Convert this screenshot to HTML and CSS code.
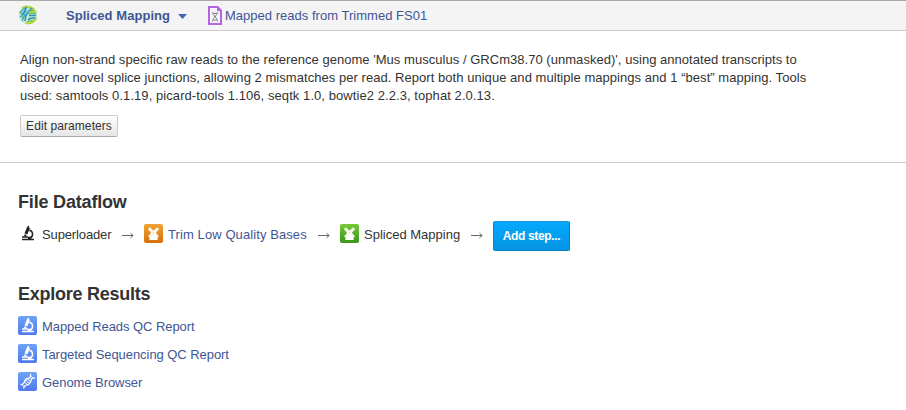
FILE: index.html
```html
<!DOCTYPE html>
<html lang="en">
<head>
<meta charset="utf-8">
<title>Spliced Mapping</title>
<link rel="stylesheet" href="styles.css">
</head>
<body>
<svg class="defs" aria-hidden="true">
  <defs>
    <linearGradient id="orange" x2="0" y2="1"><stop stop-color="#f2a336"/><stop offset="1" stop-color="#d5700b"/></linearGradient>
    <linearGradient id="green" x2="0" y2="1"><stop stop-color="#76c936"/><stop offset="1" stop-color="#38961c"/></linearGradient>
    <linearGradient id="blue" x2="0" y2="1"><stop stop-color="#6ea3f7"/><stop offset="1" stop-color="#5078ed"/></linearGradient>
    <symbol id="scope" viewBox="0 0 19 19">
      <path d="M9.2 2.8 12 4l-2.7 6.4-2.8-1.2z" fill="currentColor"/>
      <path d="M9.7 3.8 10.6 2M6.2 10.9l2.200.9M11.300 6.300c4.100.8 4.500 6.200.4 8M4 13h6M4 15.500h12" fill="none" stroke="currentColor" stroke-width="1.500"/>
      <path d="M10 12.7h2.500V15H10z" fill="currentColor"/>
    </symbol>
    <symbol id="mill" viewBox="0 0 19 19">
      <path d="M7 8C8 6 11 6 12 8l1.800 8H5.200z" fill="#fff"/>
      <path d="m4.900 4.300 9 9M14.100 4.300l-9 9" stroke="#fff" stroke-width="3"/>
      <path d="m5 4.400 8.800 8.800M14 4.400l-8.800 8.800" stroke="#dcc391" stroke-width=".5"/>
    </symbol>
  </defs>
</svg>
<header class="topbar">
  <svg class="globe" viewBox="0 0 20 20">
    <circle cx="10" cy="10" r="9.300" fill="#c5e8ce"/>
    <g fill="none">
      <path d="M4 3.500c3-3 9-2 12 1M8 18c5 1 8-1 10-5M12 7c2 0 4-3 6 0" stroke="#b5d832" stroke-width="2.200"/>
      <path d="M1.500 8c2-1 3-4 7-5.500M1.800 12c3 0 3-5 7-6M4 15.500c2-2 1-5 4-6.500" stroke="#3db2df" stroke-width="1.700"/>
      <path d="M8.500 2c-1 3-2 5-4 7.500M14 3c-4 3-7 7-7 13M11 10.500h7M10 15c2-3 5-2 7.500-2" stroke="#2b8fc4" stroke-width="1.500"/>
      <path d="M2 6c2 1 1 5 3 8M11 6c2 0 3-2 5-1M9 17c2-1 4-2 6-1M10 9c2-1 4-1 8-.5" stroke="#64bd63" stroke-width="1.300"/>
    </g>
  </svg>
  <span class="app-name">Spliced Mapping</span>
  <svg class="caret" viewBox="0 0 9 5"><path d="M0 0h9L4.500 5z" fill="#4266ad"/></svg>
  <svg class="file" viewBox="0 0 14 19">
    <path d="M1 1h8.500L13 4.500V18H1z" fill="#f7f5f8" stroke="#b265df" stroke-width="2"/>
    <path d="M9 1v4h4z" fill="#b265df"/>
    <path d="M4.500 6c0 4 5 5 5 9.500M9.500 6c0 4-5 5-5 9.500M5 7.500h4M5 14h4M6 10.500h2" fill="none" stroke="#888" stroke-width="1"/>
  </svg>
  <a class="file-name">Mapped reads from Trimmed FS01</a>
</header>
<section class="summary">
  <p><span class="l1">Align non-strand specific raw reads to the reference genome 'Mus musculus / GRCm38.70 (unmasked)', using annotated transcripts to</span><br><span class="l2">discover novel splice junctions, allowing 2 mismatches per read. Report both unique and multiple mappings and 1 “best” mapping. Tools</span><br><span class="l3">used: samtools 0.1.19, picard-tools 1.106, seqtk 1.0, bowtie2 2.2.3, tophat 2.0.13.</span></p>
  <button class="edit">Edit parameters</button>
</section>
<main>
  <h2>File Dataflow</h2>
  <div class="flow">
    <svg class="icon dark"><use href="#scope"/></svg>
    <span class="step s1">Superloader</span>
    <svg class="arrow" viewBox="0 0 12 7"><path d="M0 3.500h11M8.500 1.200l2.700 2.300L8.500 5.800" fill="none" stroke="#555" stroke-width=".9"/></svg>
    <svg class="icon"><rect width="19" height="19" rx="2" fill="url(#orange)"/><use href="#mill"/></svg>
    <a class="step s2">Trim Low Quality Bases</a>
    <svg class="arrow" viewBox="0 0 12 7"><path d="M0 3.500h11M8.500 1.200l2.700 2.300L8.500 5.800" fill="none" stroke="#555" stroke-width=".9"/></svg>
    <svg class="icon"><rect width="19" height="19" rx="2" fill="url(#green)"/><use href="#mill"/></svg>
    <span class="step s3">Spliced Mapping</span>
    <svg class="arrow" viewBox="0 0 12 7"><path d="M0 3.500h11M8.500 1.200l2.700 2.300L8.500 5.800" fill="none" stroke="#555" stroke-width=".9"/></svg>
    <button class="add">Add step...</button>
  </div>
  <h2 class="explore">Explore Results</h2>
  <ul class="results">
    <li><svg class="icon"><rect width="19" height="19" rx="2" fill="url(#blue)"/><use href="#scope"/></svg><a>Mapped Reads QC Report</a></li>
    <li><svg class="icon"><rect width="19" height="19" rx="2" fill="url(#blue)"/><use href="#scope"/></svg><a>Targeted Sequencing QC Report</a></li>
    <li><svg class="icon"><rect width="19" height="19" rx="2" fill="url(#blue)"/><path d="M2.500 12.500C8 13.500 5 6.500 9.500 6.500s2-3 3.500-4.500M5.500 16.500c1-4.500 2-2.500 5.500-4.500s0-6.500 6-6" fill="none" stroke="#fff" stroke-width="1.300"/><path d="m6 9.500 4 3.500M7 7.500l5 4.500M9 6.500l4 3.500M12.500 4l2.500 2M4 12.800l2.500 1.700" stroke="#fff" stroke-width=".9"/></svg><a>Genome Browser</a></li>
  </ul>
</main>
</body>
</html>
```
FILE: styles.css
```css
* { box-sizing: border-box; }
body {
  margin: 0;
  height: 410px;
  overflow: hidden;
  background: #fff;
  color: #333;
  font: 13px/18px "Liberation Sans", Arial, sans-serif;
}
svg { display: block; flex: none; }
a { color: #3f5694; }
.defs { position: absolute; width: 0; height: 0; }
.topbar {
  display: flex;
  align-items: center;
  height: 31px;
  padding-left: 18px;
  background: #f4f4f4;
  border-top: 1px solid #a9a9a9;
  border-bottom: 1px solid #ccc;
  white-space: nowrap;
}
.globe { width: 20px; height: 20px; margin: -1px 28px 0 0; }
.app-name { width: 104px; color: #3f5694; font-weight: bold; letter-spacing: .05px; }
.caret { width: 9px; height: 5px; margin: 2px 21px 0 8px; }
.file { width: 14px; height: 19px; margin-right: 3px; margin-top: -1px; }
.file-name { letter-spacing: .02px; }
.summary {
  height: 132px;
  padding: 20px 20px 0;
  border-bottom: 1px solid #ccc;
  white-space: nowrap;
}
.summary p { margin: 0 0 10px; }
.l1 { letter-spacing: .034px; }
.l2 { letter-spacing: .045px; }
.l3 { letter-spacing: .07px; }
button { display: block; padding: 0; font-family: inherit; white-space: nowrap; }
.edit {
  width: 98px;
  height: 22px;
  border: 1px solid #ccc;
  border-bottom-color: #aaa;
  border-radius: 2px;
  background: linear-gradient(#fff, #e5e5e5);
  color: #333;
  font-size: 12px;
  letter-spacing: .08px;
}
main { padding: 28px 18px 0; }
h2 { margin: 0; font-size: 18px; line-height: 22px; letter-spacing: -.18px; }
.flow { display: flex; align-items: center; height: 30px; margin-top: 8px; white-space: nowrap; }
.icon { width: 19px; height: 19px; color: #fff; margin: -5px 5px 0 0; }
.dark { color: #222; }
.step { margin-top: -3px; }
.s1 { width: 70px; letter-spacing: -.13px; }
.s2 { width: 140px; letter-spacing: .09px; }
.s3 { width: 97px; }
.arrow { width: 12px; height: 7px; margin: -1px 10px 0; }
.add {
  width: 77px;
  height: 30px;
  border: 1px solid #0782c5;
  border-top-color: #2492d0;
  border-radius: 2px;
  background: linear-gradient(#05a8fc, #0494e2);
  color: #fff;
  font-size: 12px;
  font-weight: bold;
  letter-spacing: -.35px;
}
.explore { margin-top: 32px; letter-spacing: -.26px; }
.results { margin: 11px 0 0; padding: 0; list-style: none; }
.results li { display: flex; height: 28px; }
.results .icon { margin-top: 0; }
.results a { margin-top: 2px; letter-spacing: -.06px; }
```
